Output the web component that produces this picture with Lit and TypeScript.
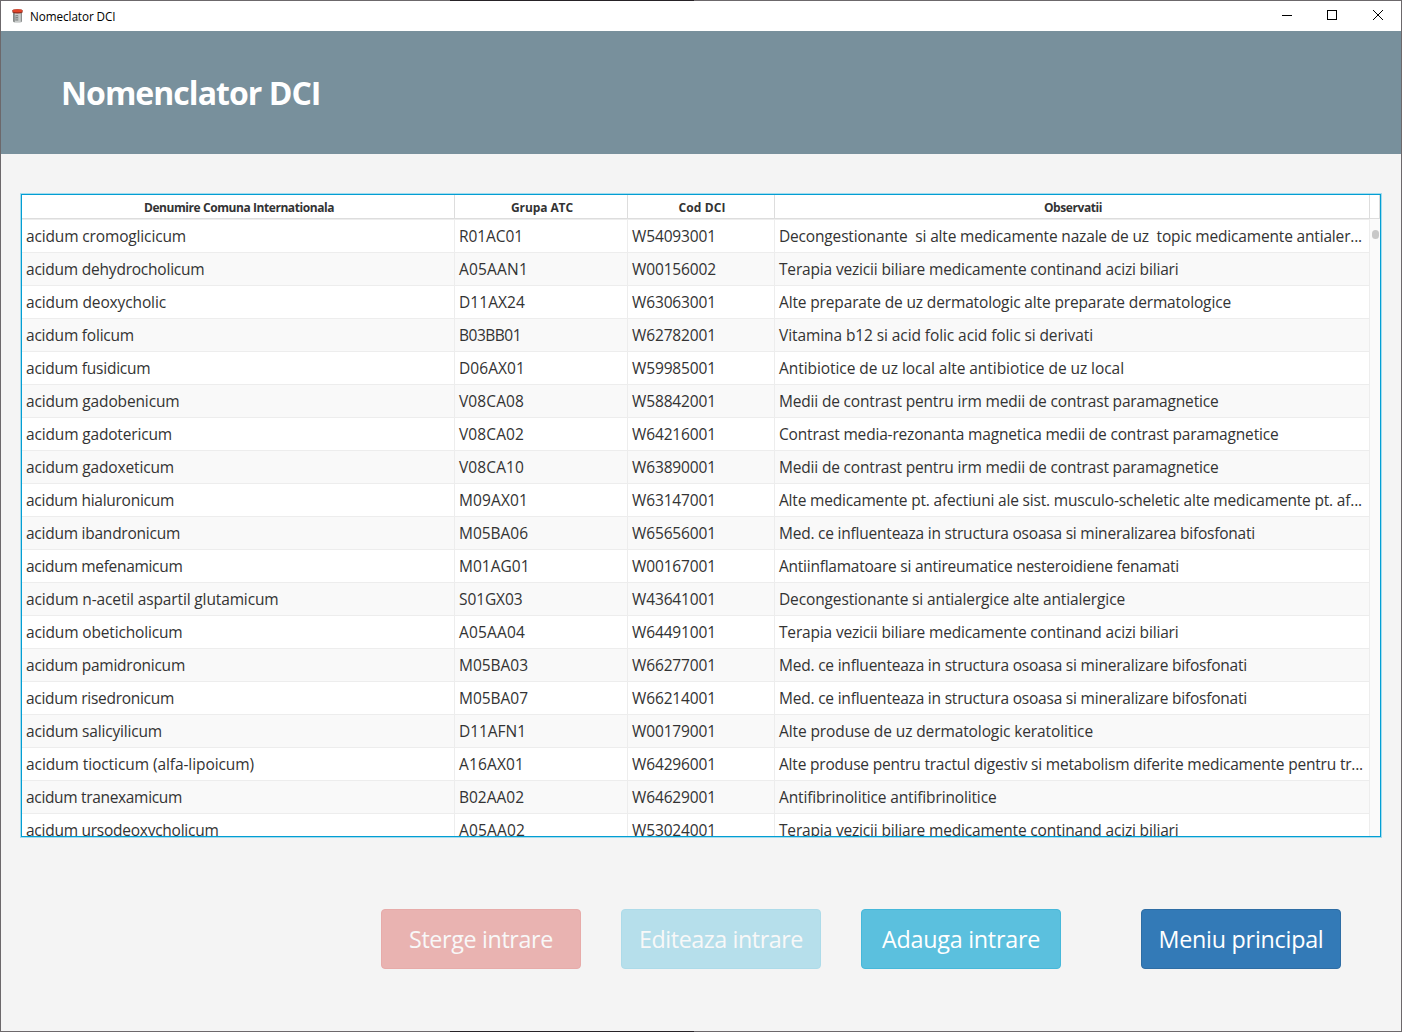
import { LitElement, html, css, svg } from "lit";
import { customElement, property } from "lit/decorators.js";

/** Text run whose tracking is computed so that it fills a given width. */
@customElement("fit-text")
class FitText extends LitElement {
  @property() text = "";
  @property({ type: Number }) width = 0;
  static styles = css`
    :host { display: inline-block; white-space: pre; }
  `;
  async firstUpdated() {
    await document.fonts.ready;
    const run = this.renderRoot.querySelector("span") as HTMLElement;
    const natural = run.getBoundingClientRect().width;
    if (natural > 0 && this.width > 0) {
      run.style.letterSpacing = `${(this.width - natural) / this.text.length}px`;
    }
  }
  render() {
    return html`<span>${this.text}</span>`;
  }
}

type Cell = [string, number];

const columns: Cell[] = [
  ["Denumire Comuna Internationala", 190],
  ["Grupa ATC", 62],
  ["Cod DCI", 47],
  ["Observatii", 58],
];

const rows: Cell[][] = [
  [["acidum cromoglicicum", 160], ["R01AC01", 64], ["W54093001", 84], ["Decongestionante  si alte medicamente nazale de uz  topic medicamente antialer...", 583]],
  [["acidum dehydrocholicum", 178.5], ["A05AAN1", 69], ["W00156002", 84], ["Terapia vezicii biliare medicamente continand acizi biliari", 399.5]],
  [["acidum deoxycholic", 140], ["D11AX24", 66], ["W63063001", 84], ["Alte preparate de uz dermatologic alte preparate dermatologice", 452]],
  [["acidum folicum", 108], ["B03BB01", 62], ["W62782001", 84], ["Vitamina b12 si acid folic acid folic si derivati", 314]],
  [["acidum fusidicum", 124.5], ["D06AX01", 66], ["W59985001", 84], ["Antibiotice de uz local alte antibiotice de uz local", 345]],
  [["acidum gadobenicum", 153.5], ["V08CA08", 65], ["W58842001", 84], ["Medii de contrast pentru irm medii de contrast paramagnetice", 439.5]],
  [["acidum gadotericum", 146], ["V08CA02", 65], ["W64216001", 84], ["Contrast media-rezonanta magnetica medii de contrast paramagnetice", 499.5]],
  [["acidum gadoxeticum", 148], ["V08CA10", 65], ["W63890001", 84], ["Medii de contrast pentru irm medii de contrast paramagnetice", 439.5]],
  [["acidum hialuronicum", 148], ["M09AX01", 69], ["W63147001", 84], ["Alte medicamente pt. afectiuni ale sist. musculo-scheletic alte medicamente pt. af...", 583]],
  [["acidum ibandronicum", 154], ["M05BA06", 69], ["W65656001", 84], ["Med. ce influenteaza in structura osoasa si mineralizarea bifosfonati", 476]],
  [["acidum mefenamicum", 156.5], ["M01AG01", 70.5], ["W00167001", 84], ["Antiinflamatoare si antireumatice nesteroidiene fenamati", 400]],
  [["acidum n-acetil aspartil glutamicum", 252.5], ["S01GX03", 63.5], ["W43641001", 84], ["Decongestionante si antialergice alte antialergice", 346]],
  [["acidum obeticholicum", 156.5], ["A05AA04", 66], ["W64491001", 84], ["Terapia vezicii biliare medicamente continand acizi biliari", 399.5]],
  [["acidum pamidronicum", 159], ["M05BA03", 69], ["W66277001", 84], ["Med. ce influenteaza in structura osoasa si mineralizare bifosfonati", 468]],
  [["acidum risedronicum", 148], ["M05BA07", 69], ["W66214001", 84], ["Med. ce influenteaza in structura osoasa si mineralizare bifosfonati", 468]],
  [["acidum salicyilicum", 136], ["D11AFN1", 67], ["W00179001", 84], ["Alte produse de uz dermatologic keratolitice", 314]],
  [["acidum tiocticum (alfa-lipoicum)", 228], ["A16AX01", 65], ["W64296001", 84], ["Alte produse pentru tractul digestiv si metabolism diferite medicamente pentru tr...", 584]],
  [["acidum tranexamicum", 156], ["B02AA02", 65], ["W64629001", 84], ["Antifibrinolitice antifibrinolitice", 217.5]],
  [["acidum ursodeoxycholicum", 192.5], ["A05AA02", 66], ["W53024001", 84], ["Terapia vezicii biliare medicamente continand acizi biliari", 399.5]],
];

const buttons: { label: string; width: number; kind: string }[] = [
  { label: "Sterge intrare", width: 144, kind: "danger off" },
  { label: "Editeaza intrare", width: 164, kind: "info off" },
  { label: "Adauga intrare", width: 158, kind: "info" },
  { label: "Meniu principal", width: 165, kind: "primary" },
];

const fit = ([text, width]: Cell) => html`<fit-text .text=${text} .width=${width}></fit-text>`;

const jarIcon = svg`
  <path d="M2 5h9v8.2q0 1.6-4.5 1.6t-4.5-1.6z" fill="#c9cccb"/>
  <path d="M2 5h1.8v9.2q-1.8-.3-1.8-1z" fill="#858988"/>
  <path d="M9.8 5h1.2v8.4l-1.2.6z" fill="#8b8f8f"/>
  <path d="M4.4 7.2h2.8v5.6h-2.8z" fill="#777b7a"/>
  <path d="M4.6 8.5h2.4M4.6 10.3h2.4M4.6 12h2.4" stroke="#dcdedd" stroke-width=".6"/>
  <path d="M1.4 2.6Q1.4 1.2 6.5 1.2t5.1 1.4v2q-1.2 1-5.1 1t-5.1-1z" fill="#8e2c1e"/>
  <ellipse cx="6.5" cy="2.8" rx="4.9" ry="1.5" fill="#e2452a"/>`;

@customElement("app-root")
class AppRoot extends LitElement {
  static styles = css`
    :host { display: block; font-family: "Open Sans", "Noto Sans", sans-serif; color: #333; }
    * { box-sizing: border-box; }
    .frame {
      width: 1402px; height: 1032px; padding: 1px;
      background: linear-gradient(90deg, #6c686b 450px, #262226 450px 694px, #6c686b 694px);
    }
    .window { height: 1030px; display: flex; flex-direction: column; background: #f4f4f4; }
    .titlebar { height: 30px; flex: none; display: flex; align-items: center; background: #fff; color: #000; font-size: 11.7px; }
    .titlebar .jar { width: 13px; height: 16px; margin: 0 6px 0 10px; }
    .titlebar .name { flex: 1; line-height: 30px; height: 30px; }
    .ctl { width: 46px; height: 30px; }
    .banner { height: 123px; flex: none; padding: 0 60px; display: flex; align-items: center; background: #78909c; color: #fff; font-size: 32px; font-weight: 700; line-height: 44px; }
    .table {
      margin: 39px 19px 0; height: 645px; flex: none; border: 1px solid #a3dcee;
      display: flex;
    }
    .inner { flex: 1; border: 1px solid #039ed3; background: #fff; display: flex; overflow: hidden; }
    .grid { width: 1348px; flex: none; }
    .row { display: grid; grid-template-columns: 433px 173px 147px 595px; height: 33px; border-bottom: 1px solid #ededed; font-size: 15.5px; }
    .row.alt { background: #f9f9f9; }
    .cell { padding-left: 4px; line-height: 32px; height: 32px; border-right: 1px solid #ededed; white-space: pre; overflow: hidden; }
    .row.head { height: 25px; border-bottom: 1px solid #ededed; font-size: 12px; font-weight: 700; background: #fff; }
    .head .cell { height: 24px; line-height: 26px; padding: 0 0 0 2px; text-align: center; border-right-color: #ddd; border-bottom: 1px solid #ddd; }
    .side { flex: 1; display: flex; flex-direction: column; background: #fafafa; }
    .corner { height: 24px; background: #fff; border-right: 1px solid #ddd; border-bottom: 1px solid #ddd; }
    .thumb { width: 7px; height: 9px; margin: 11px 0 0 2px; border-radius: 4px; background: #c8c8c8; }
    .actions { margin-top: 71px; padding-right: 60px; display: flex; justify-content: flex-end; gap: 40px; }
    .btn { width: 200px; height: 60px; border: 1px solid; border-radius: 4px; padding: 0; font: 400 23.3px/58px "Open Sans", "Noto Sans", sans-serif; color: #fff; text-align: center; }
    .danger { background: #d9534f; border-color: #d43f3a; }
    .info { background: #5bc0de; border-color: #46b8da; }
    .primary { background: #337ab7; border-color: #2e6da4; margin-left: 40px; }
    .off { opacity: 0.4; }
  `;

  render() {
    return html`
      <div class="frame">
        <div class="window">
          <div class="titlebar">
            <svg class="jar" viewBox="0 0 13 16">${jarIcon}</svg>
            <div class="name">${fit(["Nomeclator DCI", 85.5])}</div>
            <svg class="ctl" viewBox="0 0 46 30" fill="none" stroke="#000"><path d="M19 14.5h10"/></svg>
            <svg class="ctl" viewBox="0 0 46 30" fill="none" stroke="#000"><rect x="18.5" y="9.5" width="9" height="9"/></svg>
            <svg class="ctl" viewBox="0 0 46 30" fill="none" stroke="#000"><path d="M18 9l10 10M28 9l-10 10"/></svg>
          </div>
          <div class="banner">${fit(["Nomenclator DCI", 259.5])}</div>
          <div class="table">
            <div class="inner">
              <div class="grid">
                <div class="row head">${columns.map((c) => html`<div class="cell">${fit(c)}</div>`)}</div>
                ${rows.map((r, i) => html`
                  <div class="row ${i % 2 ? "alt" : ""}">${r.map((c) => html`<div class="cell">${fit(c)}</div>`)}</div>`)}
              </div>
              <div class="side"><div class="corner"></div><div class="thumb"></div></div>
            </div>
          </div>
          <div class="actions">
            ${buttons.map((b) => html`<button class="btn ${b.kind}">${fit([b.label, b.width])}</button>`)}
          </div>
        </div>
      </div>`;
  }
}
